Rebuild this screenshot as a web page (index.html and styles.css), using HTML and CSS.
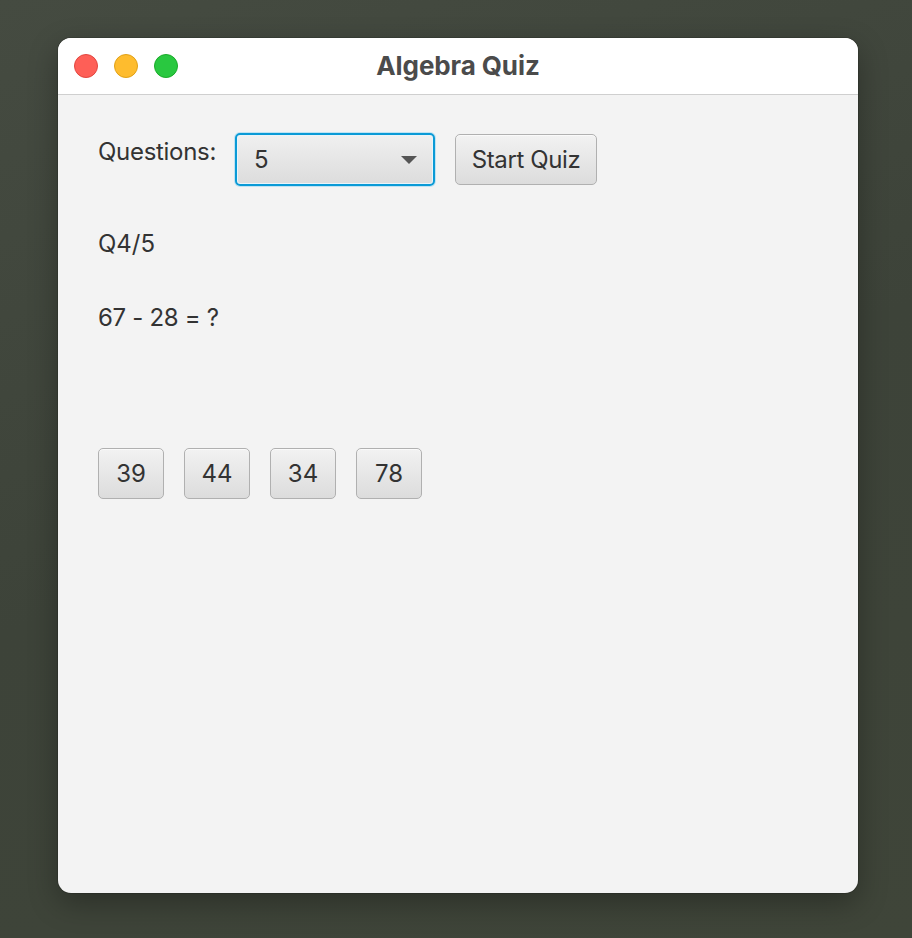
FILE: index.html
```html
<!DOCTYPE html>
<html>
<head>
<meta charset="utf-8">
<link rel="stylesheet" href="styles.css">
</head>
<body>
<div class="desktop">
  <div class="window">
    <div class="titlebar">
      <div class="lights">
        <span class="light red"></span>
        <span class="light yellow"></span>
        <span class="light green"></span>
      </div>
      <div class="title">Algebra Quiz</div>
    </div>
    <div class="content">
      <div class="toprow">
        <div class="label">Questions:</div>
        <div class="combo">
          <span class="combo-value">5</span>
          <span class="arrow"></span>
        </div>
        <div class="btn start">Start Quiz</div>
      </div>
      <div class="line progress">Q4/5</div>
      <div class="line question">67 - 28 = ?</div>
      <div class="answers">
        <div class="btn ans">39</div>
        <div class="btn ans">44</div>
        <div class="btn ans">34</div>
        <div class="btn ans">78</div>
      </div>
    </div>
  </div>
</div>
</body>
</html>
```
FILE: styles.css
```css
* { box-sizing: border-box; }
html, body { margin: 0; padding: 0; }
body {
  width: 912px;
  height: 938px;
  font-family: Inter, "Noto Sans", sans-serif;
  color: #333;
  overflow: hidden;
}
.desktop {
  width: 912px;
  height: 938px;
  background: linear-gradient(160deg, #454b41 0%, #3d4339 50%, #3f4539 100%);
  padding: 38px 54px 0 58px;
}
.window {
  width: 800px;
  height: 855px;
  border-radius: 13px;
  overflow: hidden;
  background: #f3f3f3;
  display: flex;
  flex-direction: column;
  box-shadow: 0 10px 30px rgba(0,0,0,0.3), 0 0 0 1px rgba(0,0,0,0.12);
}
.titlebar {
  height: 57px;
  flex: none;
  background: #ffffff;
  border-bottom: 1px solid #cfcfcf;
  display: flex;
  align-items: center;
  position: relative;
}
.lights {
  display: flex;
  gap: 16px;
  padding-left: 16px;
}
.light {
  width: 24px;
  height: 24px;
  border-radius: 50%;
  display: block;
}
.red { background: #fe5f57; border: 1px solid #e2463f; }
.yellow { background: #febc2e; border: 1px solid #e1a116; }
.green { background: #29c840; border: 1px solid #1aab29; }
.title {
  position: absolute;
  left: 0;
  right: 0;
  top: 0;
  bottom: 0;
  display: flex;
  align-items: center;
  justify-content: center;
  font-weight: 700;
  font-size: 26px;
  color: #4b4b4b;
  padding-bottom: 2px;
  letter-spacing: -0.1px;
}
.content {
  flex: 1;
  padding: 38px 40px 0 40px;
}
.toprow {
  display: flex;
  align-items: flex-start;
  height: 53px;
}
.label {
  font-size: 24px;
  line-height: 29px;
  margin-top: 4px;
  margin-right: 19px;
  letter-spacing: -0.3px;
}
.combo {
  width: 200px;
  height: 53px;
  border: 2px solid #0a9ad6;
  border-radius: 5px;
  box-shadow: 0 0 0 1px #bfe3f3, inset 0 0 0 1px #e9f4fa;
  background: linear-gradient(#f0f0f0, #dcdcdc);
  display: flex;
  align-items: center;
  justify-content: space-between;
  padding: 0 16px 0 17px;
  font-size: 24px;
  line-height: 29px;
  margin-right: 20px;
}
.arrow {
  width: 0;
  height: 0;
  border-left: 8px solid transparent;
  border-right: 8px solid transparent;
  border-top: 8px solid #555;
  margin-top: 1px;
}
.btn {
  height: 51px;
  border: 1px solid #b0b0b0;
  border-radius: 5px;
  background: linear-gradient(#f2f2f2, #dcdcdc);
  box-shadow: inset 0 1px 0 #fafafa;
  display: flex;
  align-items: center;
  justify-content: center;
  font-size: 24px;
  line-height: 29px;
}
.start {
  width: 142px;
  margin-top: 1px;
  letter-spacing: -0.4px;
}
.line {
  font-size: 24px;
  line-height: 29px;
}
.question { letter-spacing: -0.3px; }
.progress { margin-top: 43px; }
.question { margin-top: 45px; }
.answers {
  display: flex;
  gap: 20px;
  margin-top: 116px;
}
.ans { width: 66px; }
```
